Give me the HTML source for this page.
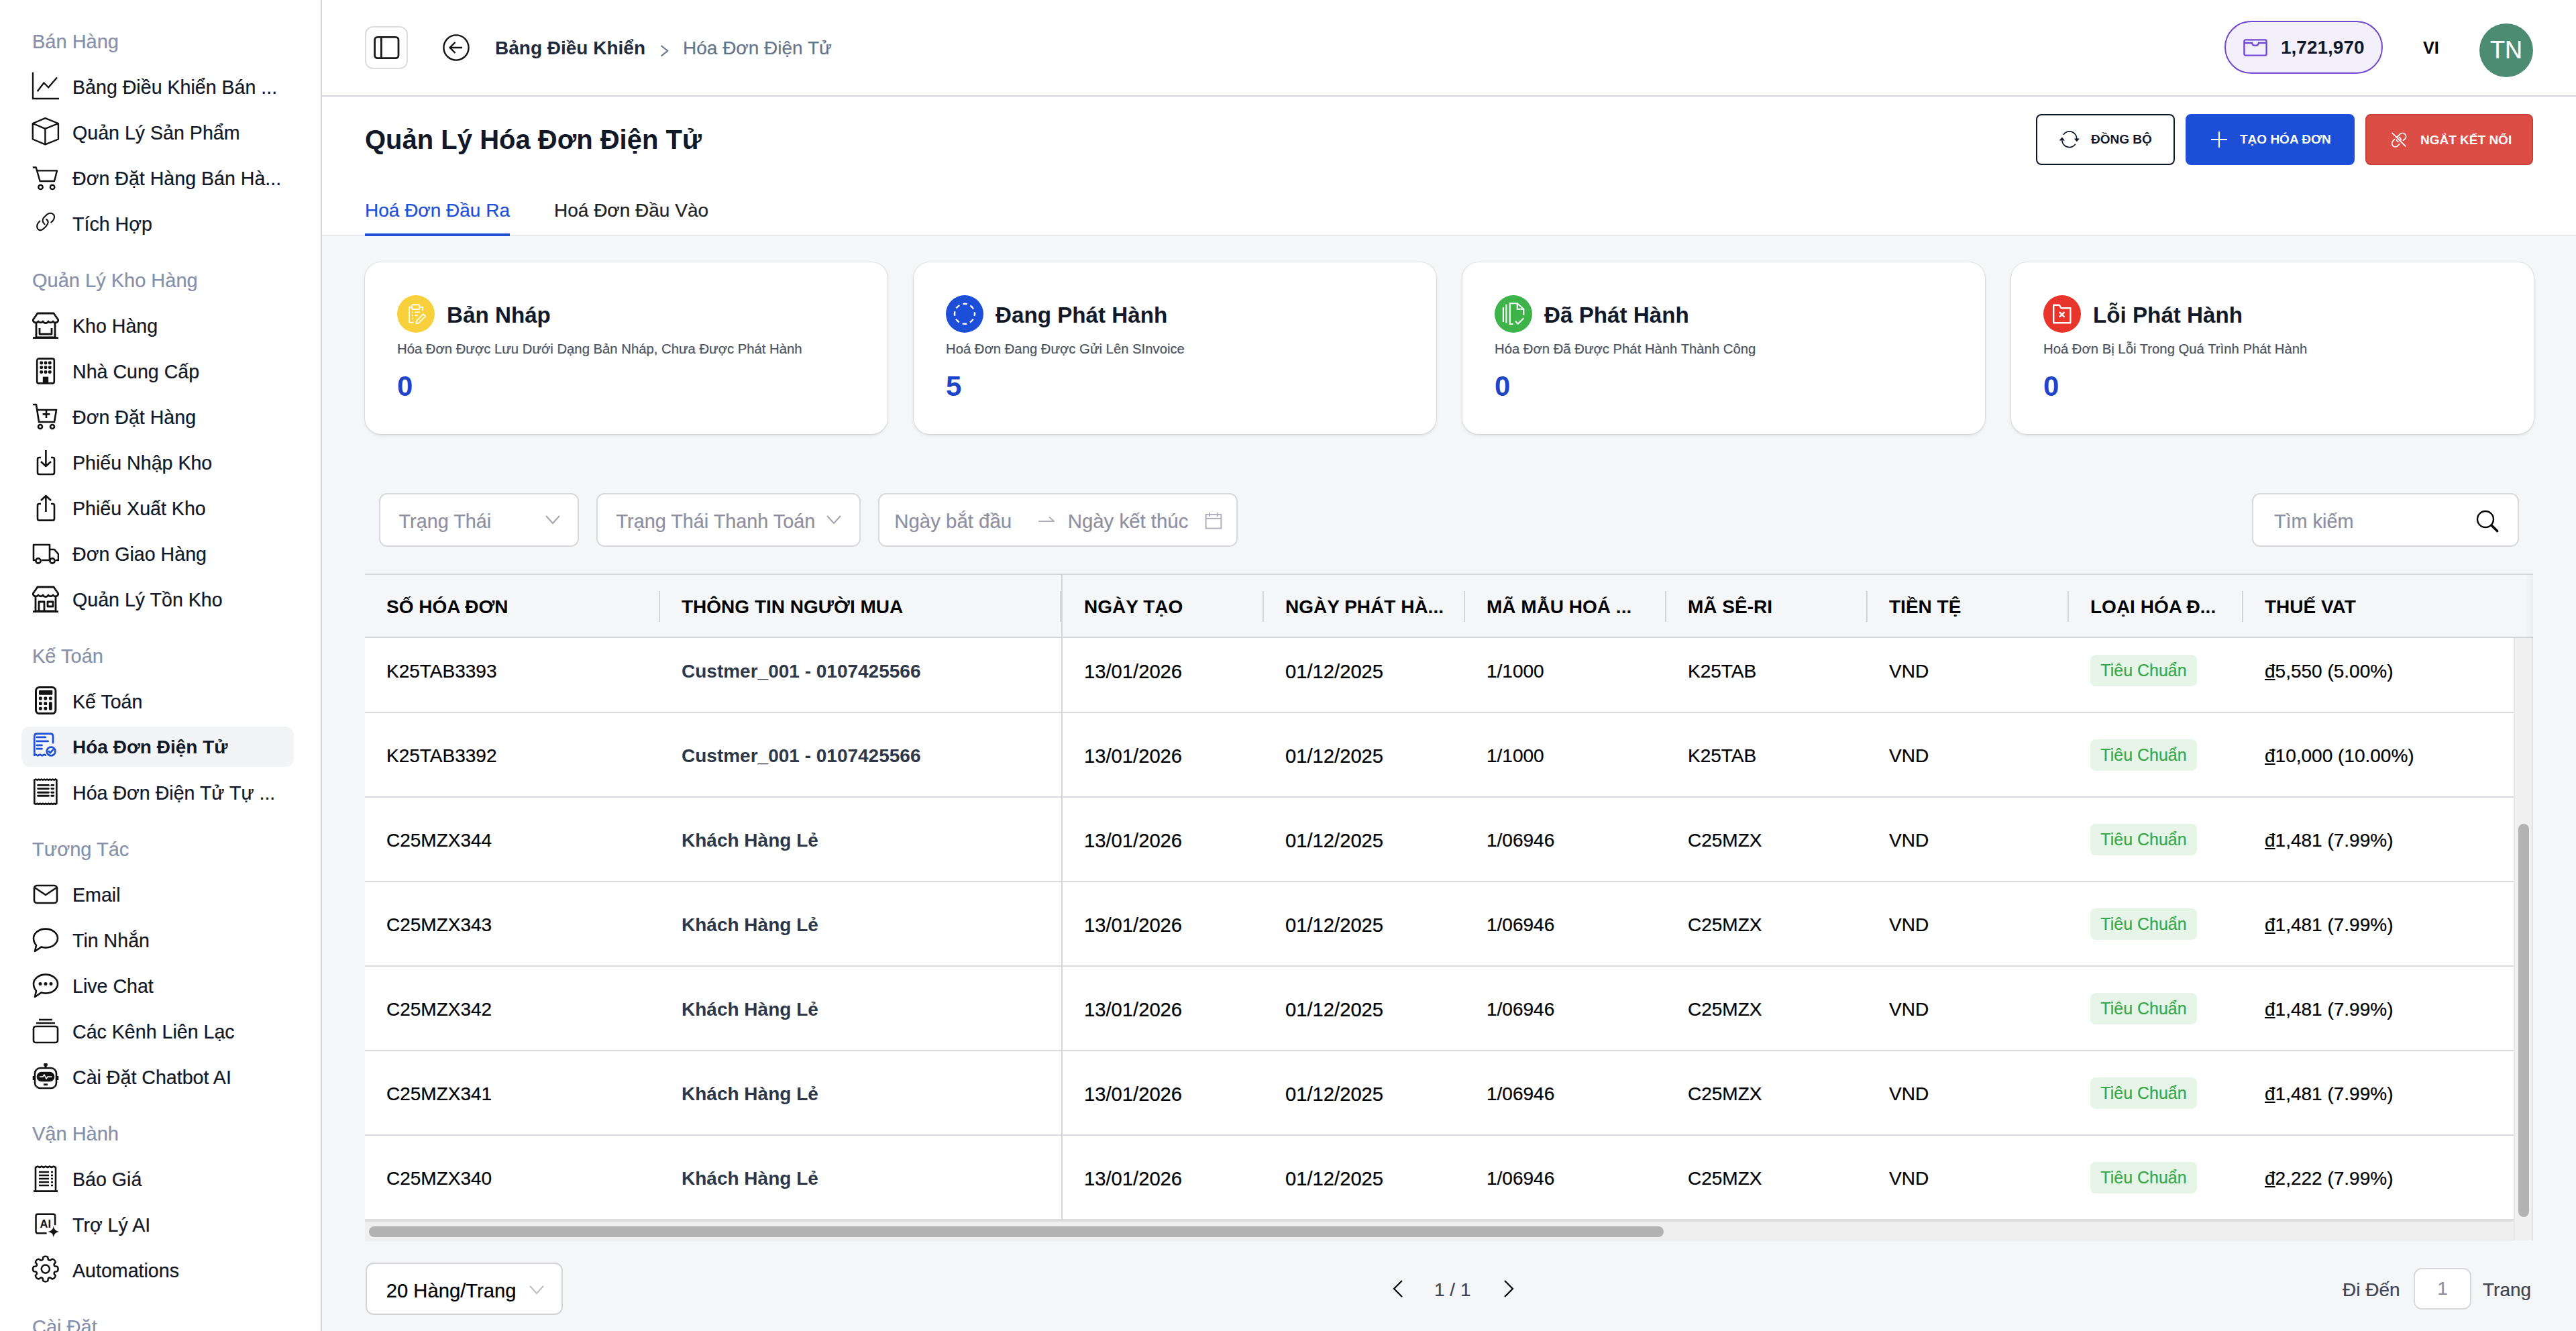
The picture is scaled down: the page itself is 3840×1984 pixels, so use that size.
<!DOCTYPE html>
<html><head><meta charset="utf-8">
<style>
html{zoom:2}
*{box-sizing:border-box;margin:0;padding:0}
body{width:1920px;height:992px;overflow:hidden;position:relative;background:#f5f6f8;font-family:"Liberation Sans",sans-serif;color:#0f172a;font-size:14px}
.abs{position:absolute}
body{-webkit-text-stroke:0.12px currentColor}
.thc,.cell.b,.card .ct,.card .cn,.btn,.it.act .tx,.bd{-webkit-text-stroke:0}
svg text{-webkit-text-stroke:0}
svg{display:block}
/* sidebar */
#sb{position:absolute;left:0;top:0;width:240px;height:992px;background:#fff;border-right:1px solid #d5d6dc;padding-top:13.5px;overflow:hidden}
.sec{height:34px;line-height:35px;padding-left:24px;color:#8690a9;font-size:14.5px;margin-top:8px;white-space:nowrap}
.sec.first{margin-top:0}
.it{height:34px;position:relative;white-space:nowrap;color:#111827}
.it .ic{position:absolute;left:24px;top:7px;width:20px;height:20px}
.it .tx{position:absolute;left:54px;top:0.5px;line-height:34px;font-size:14.3px}
.it.act::before{content:"";position:absolute;left:16px;right:20px;top:2px;bottom:2px;background:#f3f4f6;border-radius:6px}
.it.act .tx{font-weight:700;font-size:14px}
/* header */
#hd{position:absolute;left:240px;top:0;width:1680px;height:72px;background:#fff;border-bottom:1px solid #d5d6dc}
#ph{position:absolute;left:240px;top:72px;width:1680px;height:104px;background:#fff;border-bottom:1px solid #e8e9ec}
.btn{position:absolute;top:85px;height:38px;border-radius:4px;font-size:9.5px;font-weight:700;white-space:nowrap}
.card{position:absolute;top:195.7px;width:389.5px;height:127.9px;background:#fff;border-radius:12px;box-shadow:0 0 0 0.5px rgba(0,0,0,0.07),0 1px 2.5px rgba(0,0,0,0.10)}
.card .cic{position:absolute;left:24px;top:24.3px;width:28px;height:28px;border-radius:50%}
.card .ct{position:absolute;left:61px;top:27.5px;line-height:24px;font-size:16.6px;font-weight:700;color:#111827;white-space:nowrap}
.card .cs{position:absolute;left:24px;top:57.5px;line-height:14px;font-size:10.15px;color:#4b5563;white-space:nowrap}
.card .cn{position:absolute;left:24px;top:80.25px;line-height:24px;font-size:21px;font-weight:700;color:#1d45c9}
.inp{position:absolute;top:367.5px;height:40px;background:#fff;border:1px solid #d9d9dd;border-radius:6px;color:#8e8fa0;font-size:14px;white-space:nowrap}
.inp span{position:absolute;top:1.2px;line-height:38px;font-size:14.4px}
/* table */
#tbl{position:absolute;left:272px;top:427.5px;width:1616px;height:497px;border-top:1px solid #d5d6dc;overflow:hidden}
.th{position:absolute;top:0;height:47px;background:#f5f6f8;border-bottom:1px solid #d5d6dc}
.thc{position:absolute;top:1px;height:46px;line-height:46px;font-weight:700;font-size:14px;color:#000;white-space:nowrap}
.sep{position:absolute;top:12px;width:1px;height:23px;background:#d5d6dc}
.row{position:absolute;left:0;width:1601.35px;height:63px;background:#fff;border-bottom:1px solid #dcdde2}
.cell{position:absolute;top:0.75px;line-height:62px;font-size:14px;color:#000;white-space:nowrap}
.cell.dt{font-size:14.6px}
.cell.b{font-weight:700;color:#2d3748}
.dg{text-decoration:underline;text-decoration-thickness:0.9px;text-underline-offset:1.2px;text-decoration-skip-ink:none}
.tag{position:absolute;top:19.5px;height:23.5px;width:79.5px;line-height:23.5px;background:#e7f5e9;color:#3aa84b;border-radius:4px;font-size:12.5px;text-align:center}
</style></head><body>

<div id="sb">
 <div class="sec first">Bán Hàng</div>
 <div class="it"><svg class="ic" viewBox="0 0 20 20" fill="none" stroke="#111" stroke-width="1.15" style="overflow:visible"><path d="M0.5 -0.6V19H20"/><path d="M3.8 13.6L8.7 7.25L12.1 10.65L18.5 3.3"/></svg><span class="tx">Bảng Điều Khiển Bán ...</span></div>
 <div class="it"><svg class="ic" viewBox="0 0 20 20" fill="none" stroke="#111" stroke-width="1.2" stroke-linejoin="round" style="overflow:visible"><path d="M9.7 -0.4L19.45 3.5V15.25L9.7 19.2L0.4 15.25V3.5Z"/><path d="M0.4 3.5L9.7 7.45L19.45 3.5M9.7 7.45V19.2"/></svg><span class="tx">Quản Lý Sản Phẩm</span></div>
 <div class="it"><svg class="ic" viewBox="0 0 20 20" fill="none" stroke="#111" stroke-width="1.2" stroke-linejoin="round" style="overflow:visible"><path d="M0.4 2.25H2.85L5.8 12.5H16.5L18.5 4.7H3.3"/><circle cx="6.25" cy="16.95" r="1.6"/><circle cx="15.05" cy="16.95" r="1.6"/></svg><span class="tx">Đơn Đặt Hàng Bán Hà...</span></div>
 <div class="it"><svg class="ic" viewBox="0 0 20 20" fill="none" stroke="#111" stroke-width="1.05" stroke-linecap="round" style="overflow:visible"><path d="M9.27 10.65C7.5 9.2 7.3 7 9 5.3L11.15 3.3C12.8 1.8 15 2.2 16.2 3.8C17 5.2 16.2 7.8 14.15 9.15"/><path d="M10.6 6.9C12.6 8.2 12 10.5 10 12.5L8 14.3C6.2 15.7 4.2 15.2 3.63 12.8C3.3 11.3 4.3 9.5 5.7 8.2"/></svg><span class="tx">Tích Hợp</span></div>

 <div class="sec">Quản Lý Kho Hàng</div>
 <div class="it"><svg class="ic" viewBox="0 0 20 20" fill="none" stroke="#111" stroke-width="1.4" stroke-linejoin="round"><path d="M4 1H16L19.5 6A2.2 2.2 0 0 1 15.5 7A2.2 2.2 0 0 1 12 7A2.2 2.2 0 0 1 8 7A2.2 2.2 0 0 1 4.5 7A2.2 2.2 0 0 1 0.5 6Z"/><path d="M3 8.5V19H17V8.5M5.5 12V16.5H14.5V12M0.5 19.3H19.5"/></svg><span class="tx">Kho Hàng</span></div>
 <div class="it"><svg class="ic" viewBox="0 0 20 20"><rect x="3.6" y="0.8" width="12.8" height="18.4" rx="1.3" fill="none" stroke="#111" stroke-width="1.3"/><g fill="#111"><rect x="5.7" y="2.8" width="2.3" height="2.3" rx="0.7"/><rect x="8.85" y="2.8" width="2.3" height="2.3" rx="0.7"/><rect x="12" y="2.8" width="2.3" height="2.3" rx="0.7"/><rect x="5.7" y="6.2" width="2.3" height="2.3" rx="0.7"/><rect x="8.85" y="6.2" width="2.3" height="2.3" rx="0.7"/><rect x="12" y="6.2" width="2.3" height="2.3" rx="0.7"/><rect x="5.7" y="9.6" width="2.3" height="2.3" rx="0.7"/><rect x="8.85" y="9.6" width="2.3" height="2.3" rx="0.7"/><rect x="12" y="9.6" width="2.3" height="2.3" rx="0.7"/><rect x="7.9" y="14.3" width="4.2" height="5"/></g></svg><span class="tx">Nhà Cung Cấp</span></div>
 <div class="it"><svg class="ic" viewBox="0 0 20 20" fill="none" stroke="#111" stroke-width="1.3" stroke-linejoin="round"><path d="M0.5 1H3L5 14H16.5L18 5H3.8"/><circle cx="6" cy="17.5" r="1.5"/><circle cx="15" cy="17.5" r="1.5"/><path d="M10.5 5.5V11M7.8 8.2H13.2"/></svg><span class="tx">Đơn Đặt Hàng</span></div>
 <div class="it"><svg class="ic" viewBox="0 0 20 20" fill="none" stroke="#111" stroke-width="1.3" stroke-linejoin="round"><path d="M6.5 6.5H5.2Q4 6.5 4 7.7V17.8Q4 19 5.2 19H15.3Q16.5 19 16.5 17.8V7.7Q16.5 6.5 15.3 6.5H14"/><path d="M10.2 1V13M6.5 9.5L10.2 13L14 9.5"/></svg><span class="tx">Phiếu Nhập Kho</span></div>
 <div class="it"><svg class="ic" viewBox="0 0 20 20" fill="none" stroke="#111" stroke-width="1.3" stroke-linejoin="round"><path d="M6.5 7H5.2Q4 7 4 8.2V18.1Q4 19.3 5.2 19.3H15.3Q16.5 19.3 16.5 18.1V8.2Q16.5 7 15.3 7H14"/><path d="M10.2 13V1M6.5 4.5L10.2 1L14 4.5"/></svg><span class="tx">Phiếu Xuất Kho</span></div>
 <div class="it"><svg class="ic" viewBox="0 0 20 20" fill="none" stroke="#111" stroke-width="1.3" stroke-linejoin="round"><path d="M2.5 15H1V3.5H13V15H7M13 7H16.5L19.5 10.5V15H17.5M13 15H12.5"/><circle cx="4.5" cy="15.5" r="1.8"/><circle cx="15" cy="15.5" r="1.8"/></svg><span class="tx">Đơn Giao Hàng</span></div>
 <div class="it"><svg class="ic" viewBox="0 0 20 20" fill="none" stroke="#111" stroke-width="1.4" stroke-linejoin="round"><path d="M4 1H16L19.5 6A2.2 2.2 0 0 1 15.5 7A2.2 2.2 0 0 1 12 7A2.2 2.2 0 0 1 8 7A2.2 2.2 0 0 1 4.5 7A2.2 2.2 0 0 1 0.5 6Z"/><path d="M2.5 8.5V19H17.5V8.5M5 19V12H9V19M11.5 12H15.5V15.5H11.5ZM0.5 19.3H19.5"/></svg><span class="tx">Quản Lý Tồn Kho</span></div>

 <div class="sec">Kế Toán</div>
 <div class="it"><svg class="ic" viewBox="0 0 20 20" style="overflow:visible"><rect x="2.75" y="-0.2" width="14.7" height="19.5" rx="2.6" fill="none" stroke="#111" stroke-width="1.5"/><g fill="#111"><rect x="5" y="2" width="10.15" height="3.4" rx="0.6"/><rect x="4.95" y="6.8" width="2.4" height="2.4" rx="0.8"/><rect x="8.7" y="6.8" width="2.4" height="2.4" rx="0.8"/><rect x="12.45" y="6.8" width="2.4" height="2.4" rx="0.8"/><rect x="4.95" y="10.6" width="2.4" height="2.4" rx="0.8"/><rect x="8.7" y="10.6" width="2.4" height="2.4" rx="0.8"/><rect x="12.45" y="10.6" width="2.4" height="6.15" rx="0.8"/><rect x="4.95" y="14.35" width="2.4" height="2.4" rx="0.8"/><rect x="8.7" y="14.35" width="2.4" height="2.4" rx="0.8"/></g></svg><span class="tx">Kế Toán</span></div>
 <div class="it act"><svg class="ic" viewBox="0 0 20 20" fill="none" stroke="#1f4fd6" stroke-width="1.35" stroke-linecap="round" stroke-linejoin="round" style="overflow:visible"><path d="M9.9 16.3Q9 15.6 8.2 16.3Q7.4 17 6.6 16.3Q5.8 15.6 5 16.3Q4.2 17 3.4 16.3Q2.6 15.6 1.65 16.4V2.4Q1.65 0.35 3.7 0.35H13.5Q15.55 0.35 15.55 2.4V7.1"/><path d="M3.5 2.97H9.9M3.5 5.97H11.8M3.5 8.97H7.25M3.5 11.6H7.25"/><circle cx="14.05" cy="13.5" r="3.2"/><path d="M12.3 13.5L13.45 14.6L15.4 12.4"/></svg><span class="tx">Hóa Đơn Điện Tử</span></div>
 <div class="it"><svg class="ic" viewBox="0 0 20 20" fill="none" stroke="#111" stroke-width="1.3" style="overflow:visible"><path d="M1.65 0.8L2.7 0.3L3.75 0.8L4.8 0.3L5.85 0.8L6.9 0.3L7.95 0.8L9 0.3L10.05 0.8L11.1 0.3L12.15 0.8L13.2 0.3L14.25 0.8L15.3 0.3L16.35 0.8L17.4 0.3L18.2 0.8V18.4L17.4 18.9L16.35 18.4L15.3 18.9L14.25 18.4L13.2 18.9L12.15 18.4L11.1 18.9L10.05 18.4L9 18.9L7.95 18.4L6.9 18.9L5.85 18.4L4.8 18.9L3.75 18.4L2.7 18.9L1.65 18.4Z"/><path d="M4.3 4.7H12.2M4.3 7.3H12.2M4.3 10.1H12.2M4.3 12.6H12.2M14.4 4.7H15.9M14.4 7.3H15.9M14.4 10.1H15.9M14.4 12.6H15.9" stroke-width="1.45" stroke-linecap="round"/></svg><span class="tx">Hóa Đơn Điện Tử Tự ...</span></div>

 <div class="sec">Tương Tác</div>
 <div class="it"><svg class="ic" viewBox="0 0 20 20" fill="none" stroke="#111" stroke-width="1.3" stroke-linejoin="round"><rect x="1.5" y="3.5" width="17" height="13" rx="2"/><path d="M1.8 5L10 10.5L18.2 5"/></svg><span class="tx">Email</span></div>
 <div class="it"><svg class="ic" viewBox="0 0 20 20" fill="none" stroke="#111" stroke-width="1.3" stroke-linejoin="round"><path d="M10 1.8C15 1.8 19 4.9 19 8.8C19 12.7 15 15.8 10 15.8C8.8 15.8 7.7 15.6 6.7 15.3L2 18.5L3 14C1.8 12.6 1 10.8 1 8.8C1 4.9 5 1.8 10 1.8Z"/></svg><span class="tx">Tin Nhắn</span></div>
 <div class="it"><svg class="ic" viewBox="0 0 20 20" fill="none" stroke="#111" stroke-width="1.3" stroke-linejoin="round"><path d="M10 1.8C15 1.8 19 4.9 19 8.8C19 12.7 15 15.8 10 15.8C8.8 15.8 7.7 15.6 6.7 15.3L2 18.5L3 14C1.8 12.6 1 10.8 1 8.8C1 4.9 5 1.8 10 1.8Z"/><circle cx="6" cy="8.8" r="0.6" fill="#111"/><circle cx="10" cy="8.8" r="0.6" fill="#111"/><circle cx="14" cy="8.8" r="0.6" fill="#111"/></svg><span class="tx">Live Chat</span></div>
 <div class="it"><svg class="ic" viewBox="0 0 20 20" fill="none" stroke="#111" stroke-width="1.3" stroke-linejoin="round"><rect x="1" y="6.5" width="18" height="12" rx="1.5"/><path d="M3 4H17M5 1.5H15"/></svg><span class="tx">Các Kênh Liên Lạc</span></div>
 <div class="it"><svg class="ic" viewBox="0 0 20 20" fill="none" stroke="#111" stroke-width="1.3" stroke-linejoin="round"><path d="M10 3V1"/><circle cx="10" cy="1" r="0.8" fill="#111"/><rect x="2" y="3.5" width="16" height="15" rx="4"/><rect x="4" y="7" width="12" height="6" rx="3" fill="#111"/><path d="M5.5 10H8L9 8.5L10.5 11.5L11.5 10H14.5" stroke="#fff" stroke-width="0.8"/><path d="M8.5 15.8H11.5M1 9.5V12.5M19 9.5V12.5"/></svg><span class="tx">Cài Đặt Chatbot AI</span></div>

 <div class="sec">Vận Hành</div>
 <div class="it"><svg class="ic" viewBox="0 0 20 20" fill="none" stroke="#111" stroke-width="1.3"><path d="M2.5 19V1.5L4 0.8L5.5 1.5L7 0.8L8.5 1.5L10 0.8L11.5 1.5L13 0.8L14.5 1.5L16 0.8L17.5 1.5V19M1 19.3H19"/><path d="M5 5H12.5M5 7.5H12.5M5 10H12.5M5 12.5H12.5M5 15H12.5M14 5H15.5M14 7.5H15.5M14 10H15.5M14 12.5H15.5M14 15H15.5"/></svg><span class="tx">Báo Giá</span></div>
 <div class="it"><svg class="ic" viewBox="0 0 20 20" fill="none" stroke="#111" stroke-width="1.25" stroke-linejoin="round" style="overflow:visible"><path d="M10.8 16.65H4.2Q2.77 16.65 2.77 15.2V3.8Q2.77 2.35 4.2 2.35H15.6Q17.05 2.35 17.05 3.8V10.6"/><text x="9.9" y="12.5" text-anchor="middle" font-size="8.6" font-family="Liberation Sans" font-weight="700" fill="#111" stroke="none" textLength="8.2" lengthAdjust="spacingAndGlyphs">AI</text><path d="M15.9 11.4Q16.4 15 20 15.5Q16.4 16 15.9 19.6Q15.4 16 11.8 15.5Q15.4 15 15.9 11.4Z" fill="#111" stroke="none"/></svg><span class="tx">Trợ Lý AI</span></div>
 <div class="it"><svg class="ic" viewBox="0 0 20 20" fill="none" stroke="#111" stroke-width="1.25" stroke-linejoin="round" style="overflow:visible"><path d="M7.86 2.29 L8.14 0.47 Q9.90 -0.70 11.66 0.47 L11.94 2.29 Q12.50 3.02 13.42 2.90 L14.90 1.82 Q16.97 2.23 17.38 4.30 L16.30 5.78 Q16.18 6.70 16.91 7.26 L18.73 7.54 Q19.90 9.30 18.73 11.06 L16.91 11.34 Q16.18 11.90 16.30 12.82 L17.38 14.30 Q16.97 16.37 14.90 16.78 L13.42 15.70 Q12.50 15.58 11.94 16.31 L11.66 18.13 Q9.90 19.30 8.14 18.13 L7.86 16.31 Q7.30 15.58 6.38 15.70 L4.90 16.78 Q2.83 16.37 2.42 14.30 L3.50 12.82 Q3.62 11.90 2.89 11.34 L1.07 11.06 Q-0.10 9.30 1.07 7.54 L2.89 7.26 Q3.62 6.70 3.50 5.78 L2.42 4.30 Q2.83 2.23 4.90 1.82 L6.38 2.90 Q7.30 3.02 7.86 2.29Z"/><circle cx="9.9" cy="9.3" r="3.05"/></svg><span class="tx">Automations</span></div>
 <div class="sec">Cài Đặt</div>
</div>

<div id="hd">
 <div class="abs" style="left:32px;top:19.5px;width:32px;height:32px;border:1px solid #dcdce1;border-radius:6px"><svg class="abs" style="left:5px;top:6px" width="20" height="18" viewBox="0 0 20 18" fill="none" stroke="#1a1a1a" stroke-width="1.4"><rect x="1.3" y="1.2" width="17.7" height="15.6" rx="2"/><path d="M6.2 1.2V16.8"/></svg></div>
 <svg class="abs" style="left:90px;top:25.5px" width="20" height="20" viewBox="0 0 20 20" fill="none" stroke="#111" stroke-width="1.2"><circle cx="10" cy="10" r="9.3"/><path d="M14.5 10H5.5M9.3 6L5.3 10L9.3 14"/></svg>
 <span class="abs" style="left:129px;top:26px;line-height:20px;font-weight:700;color:#1e293b;white-space:nowrap;-webkit-text-stroke:0">Bảng Điều Khiển</span>
 <svg class="abs" style="left:252px;top:33.5px" width="7" height="9" viewBox="0 0 7 9" fill="none" stroke="#64748b" stroke-width="1"><path d="M0.8 0.5L5.6 4.4L0.8 8.3"/></svg>
 <span class="abs" style="left:269px;top:26px;line-height:20px;color:#64748b;white-space:nowrap">Hóa Đơn Điện Tử</span>
 <div class="abs" style="left:1418px;top:15.5px;width:118px;height:39.5px;border:1px solid #7048d4;border-radius:20px;background:#f3f0fc"></div>
 <svg class="abs" style="left:1432px;top:29px" width="18" height="13" viewBox="0 0 18 13" fill="none" stroke="#7048d4" stroke-width="1.2"><rect x="0.7" y="0.7" width="16.6" height="11.6" rx="1"/><path d="M0.7 3H6.5Q6.8 5 9 5Q11.2 5 11.5 3H17.3"/></svg>
 <span class="abs" style="left:1460px;top:25.5px;line-height:20px;font-weight:700;color:#0f172a;-webkit-text-stroke:0">1,721,970</span>
 <span class="abs" style="left:1566px;top:27.3px;line-height:16px;font-size:12.6px;font-weight:700;color:#000;-webkit-text-stroke:0">VI</span>
 <div class="abs" style="left:1608px;top:17.5px;width:40px;height:40px;border-radius:50%;background:#4b8c72;color:#fff;font-size:18px;line-height:40px;text-align:center">TN</div>
</div>

<div id="ph">
 <span class="abs" style="left:32px;top:18px;line-height:28px;font-size:20px;font-weight:700;color:#111827;white-space:nowrap;-webkit-text-stroke:0">Quản Lý Hóa Đơn Điện Tử</span>
 <span class="abs" style="left:32px;top:74.75px;line-height:20px;color:#1d4fd8;white-space:nowrap">Hoá Đơn Đầu Ra</span>
 <div class="abs" style="left:32px;top:102px;width:108px;height:2px;background:#1d4fd8"></div>
 <span class="abs" style="left:173px;top:74.75px;line-height:20px;color:#1f1f1f;white-space:nowrap">Hoá Đơn Đầu Vào</span>
</div>

<div class="btn" style="left:1517.5px;width:103.5px;border:1px solid #0f172a;background:#fff;color:#0f172a">
 <svg class="abs" style="left:-1px;top:-1px;overflow:visible" width="50" height="38" viewBox="0 0 50 38"><path d="M20.45 15.45A5.4 5.4 0 0 1 30.4 18.5M19.45 19.8A5.5 5.5 0 0 0 29.4 22.4" fill="none" stroke="#0f172a" stroke-width="0.85"/><path d="M28.4 18.25H32.5L30.4 20.6ZM17.3 19.7H21.5L19.45 17.2Z" fill="#0f172a"/></svg>
 <span class="abs" style="left:40px;top:11px;line-height:14px">ĐỒNG BỘ</span>
</div>
<div class="btn" style="left:1629px;width:126px;background:#1d4ed8;color:#fff">
 <svg class="abs" style="left:18.5px;top:12.5px" width="13" height="13" viewBox="0 0 13 13" stroke="#fff" stroke-width="1.1"><path d="M6.5 0.5V12.5M0.5 6.5H12.5"/></svg>
 <span class="abs" style="left:40.5px;top:12px;line-height:14px">TẠO HÓA ĐƠN</span>
</div>
<div class="btn" style="left:1763px;width:125px;background:#dc4d45;border:1px solid #c9403a;color:#fff">
 <svg class="abs" style="left:17px;top:11px;overflow:visible" width="14" height="14" viewBox="0 0 14 14" fill="none" stroke="#fff" stroke-width="0.9" stroke-linecap="round"><path d="M2.05 2.2L11.85 11.9"/><path d="M5.6 5.2L8 2.8A2.55 2.55 0 0 1 11.6 6.4L10.3 7.6"/><path d="M3.7 7L2.6 8.1A2.5 2.5 0 0 0 6.1 11.7L7.5 10.3"/><path d="M7.2 5.3Q8.4 6 8.6 7.4M5.2 7.3Q5.7 8.3 6.4 8.6"/></svg>
 <span class="abs" style="left:40px;top:11.5px;line-height:14px">NGẮT KẾT NỐI</span>
</div>

<!-- cards -->
<div class="card" style="left:272px">
 <div class="cic" style="background:#f7d03c"><svg class="abs" style="left:0;top:0" width="28" height="28" viewBox="0 0 28 28" fill="none" stroke="#fffdf0" stroke-width="0.95" stroke-linejoin="round"><path d="M11 8.85H9V20.3H12.3M16.7 8.85H19.1V11.8"/><rect x="11.05" y="7.15" width="5.6" height="3.35" rx="0.8"/><path d="M11.1 12.7H11.9M13.25 12.7H16.9M11.1 15.15H11.9M13.25 15.15H15.2M11.1 17.55H11.9"/><path d="M19.5 14.1L21.1 15.7L16.1 20.7L14.2 21.2L14.5 19.1Z"/></svg></div>
 <div class="ct">Bản Nháp</div>
 <div class="cs">Hóa Đơn Được Lưu Dưới Dạng Bản Nháp, Chưa Được Phát Hành</div>
 <div class="cn">0</div>
</div>
<div class="card" style="left:681px">
 <div class="cic" style="background:#1d4ed8"><svg class="abs" style="left:0;top:0" width="28" height="28" viewBox="0 0 28 28" fill="none" stroke="#fff" stroke-width="1.2" stroke-dasharray="3.3 2.59" stroke-dashoffset="1.65"><circle cx="14" cy="13.9" r="7.5"/></svg></div>
 <div class="ct">Đang Phát Hành</div>
 <div class="cs">Hoá Đơn Đang Được Gửi Lên SInvoice</div>
 <div class="cn">5</div>
</div>
<div class="card" style="left:1090px">
 <div class="cic" style="background:#3db34a"><svg class="abs" style="left:0;top:0" width="28" height="28" viewBox="0 0 28 28" fill="none" stroke="#fff" stroke-width="1.05"><path d="M6.45 8.85V20M8.7 6.9V20.75"/><path d="M13.85 21.5H11.4V6.15H16.9L21.65 10.4V14.9"/><path d="M16.9 6.15V10.4H21.65"/><path d="M15.5 19.4L17.45 21.35L21.65 17.1"/></svg></div>
 <div class="ct">Đã Phát Hành</div>
 <div class="cs">Hóa Đơn Đã Được Phát Hành Thành Công</div>
 <div class="cn">0</div>
</div>
<div class="card" style="left:1499px">
 <div class="cic" style="background:#e8352b"><svg class="abs" style="left:0;top:0" width="28" height="28" viewBox="0 0 28 28" fill="none" stroke="#fff" stroke-width="1.2" stroke-linejoin="round"><path d="M7.6 7.35H11.85L13.25 9.6H20.15V20.6H7.6Z"/><path d="M12.35 12.95L15.35 15.95M15.35 12.95L12.35 15.95" stroke-width="1.3" stroke-linecap="round"/></svg></div>
 <div class="ct">Lỗi Phát Hành</div>
 <div class="cs">Hoá Đơn Bị Lỗi Trong Quá Trình Phát Hành</div>
 <div class="cn">0</div>
</div>

<!-- filters -->
<div class="inp" style="left:282.3px;width:149.2px"><span style="left:14px">Trạng Thái</span><svg class="abs" style="left:123px;top:15px" width="11" height="8" viewBox="0 0 11 8" fill="none" stroke="#a3a4b0" stroke-width="1"><path d="M0.5 1L5.5 6.5L10.5 1"/></svg></div>
<div class="inp" style="left:444.3px;width:197.2px"><span style="left:14px">Trạng Thái Thanh Toán</span><svg class="abs" style="left:170.5px;top:15px" width="11" height="8" viewBox="0 0 11 8" fill="none" stroke="#a3a4b0" stroke-width="1"><path d="M0.5 1L5.5 6.5L10.5 1"/></svg></div>
<div class="inp" style="left:654.35px;width:268.25px"><span style="left:11.3px;font-size:14.7px">Ngày bắt đầu</span><svg class="abs" style="left:118.5px;top:16px" width="12" height="5" viewBox="0 0 12 5" fill="none" stroke="#b0b1bc" stroke-width="1"><path d="M0 4H11.5L8 0.8"/></svg><span style="left:140.5px;font-size:14.7px">Ngày kết thúc</span><svg class="abs" style="left:242.5px;top:13px" width="13" height="13" viewBox="0 0 13 13" fill="none" stroke="#b0b1bc" stroke-width="1"><rect x="0.8" y="2" width="11.4" height="10.3"/><path d="M0.8 5H12.2M3.5 0.5V3.5M9.5 0.5V3.5"/></svg></div>
<div class="inp" style="left:1678.5px;width:199.1px"><span style="left:15.5px">Tìm kiếm</span><svg class="abs" style="left:166px;top:11.5px" width="17" height="17" viewBox="0 0 17 17" fill="none" stroke="#000" stroke-width="1.2"><circle cx="7" cy="7" r="6"/><path d="M11.5 11.5L15.8 15.8" stroke-width="1.8" stroke-linecap="round"/></svg></div>

<!-- table -->
<div id="tbl">
 <div class="th" style="left:0;width:1616px">
  <span class="thc" style="left:16px">SỐ HÓA ĐƠN</span><div class="sep" style="left:219px"></div>
  <span class="thc" style="left:236px">THÔNG TIN NGƯỜI MUA</span><div class="sep" style="left:518px"></div>
  <span class="thc" style="left:536px">NGÀY TẠO</span><div class="sep" style="left:669px"></div>
  <span class="thc" style="left:686px">NGÀY PHÁT HÀ...</span><div class="sep" style="left:819px"></div>
  <span class="thc" style="left:836px">MÃ MẪU HOÁ ...</span><div class="sep" style="left:969px"></div>
  <span class="thc" style="left:986px">MÃ SÊ-RI</span><div class="sep" style="left:1119px"></div>
  <span class="thc" style="left:1136px">TIỀN TỆ</span><div class="sep" style="left:1269px"></div>
  <span class="thc" style="left:1286px">LOẠI HÓA Đ...</span><div class="sep" style="left:1399px"></div>
  <span class="thc" style="left:1416px">THUẾ VAT</span>
 </div>
 <div id="body" class="abs" style="left:0;top:47px;width:1601.35px;height:434px;overflow:hidden;background:#fff">
  <div class="abs" style="left:0;top:-7px;width:1601.35px">
   <div class="row" style="top:0px"><span class="cell" style="left:16px">K25TAB3393</span><span class="cell b" style="left:236px">Custmer_001 - 0107425566</span><span class="cell dt" style="left:536px">13/01/2026</span><span class="cell dt" style="left:686px">01/12/2025</span><span class="cell" style="left:836px">1/1000</span><span class="cell" style="left:986px">K25TAB</span><span class="cell" style="left:1136px">VND</span><span class="tag" style="left:1286px">Tiêu Chuẩn</span><span class="cell" style="left:1416px"><u class="dg">đ</u>5,550 (5.00%)</span></div>
   <div class="row" style="top:63px"><span class="cell" style="left:16px">K25TAB3392</span><span class="cell b" style="left:236px">Custmer_001 - 0107425566</span><span class="cell dt" style="left:536px">13/01/2026</span><span class="cell dt" style="left:686px">01/12/2025</span><span class="cell" style="left:836px">1/1000</span><span class="cell" style="left:986px">K25TAB</span><span class="cell" style="left:1136px">VND</span><span class="tag" style="left:1286px">Tiêu Chuẩn</span><span class="cell" style="left:1416px"><u class="dg">đ</u>10,000 (10.00%)</span></div>
   <div class="row" style="top:126px"><span class="cell" style="left:16px">C25MZX344</span><span class="cell b" style="left:236px">Khách Hàng Lẻ</span><span class="cell dt" style="left:536px">13/01/2026</span><span class="cell dt" style="left:686px">01/12/2025</span><span class="cell" style="left:836px">1/06946</span><span class="cell" style="left:986px">C25MZX</span><span class="cell" style="left:1136px">VND</span><span class="tag" style="left:1286px">Tiêu Chuẩn</span><span class="cell" style="left:1416px"><u class="dg">đ</u>1,481 (7.99%)</span></div>
   <div class="row" style="top:189px"><span class="cell" style="left:16px">C25MZX343</span><span class="cell b" style="left:236px">Khách Hàng Lẻ</span><span class="cell dt" style="left:536px">13/01/2026</span><span class="cell dt" style="left:686px">01/12/2025</span><span class="cell" style="left:836px">1/06946</span><span class="cell" style="left:986px">C25MZX</span><span class="cell" style="left:1136px">VND</span><span class="tag" style="left:1286px">Tiêu Chuẩn</span><span class="cell" style="left:1416px"><u class="dg">đ</u>1,481 (7.99%)</span></div>
   <div class="row" style="top:252px"><span class="cell" style="left:16px">C25MZX342</span><span class="cell b" style="left:236px">Khách Hàng Lẻ</span><span class="cell dt" style="left:536px">13/01/2026</span><span class="cell dt" style="left:686px">01/12/2025</span><span class="cell" style="left:836px">1/06946</span><span class="cell" style="left:986px">C25MZX</span><span class="cell" style="left:1136px">VND</span><span class="tag" style="left:1286px">Tiêu Chuẩn</span><span class="cell" style="left:1416px"><u class="dg">đ</u>1,481 (7.99%)</span></div>
   <div class="row" style="top:315px"><span class="cell" style="left:16px">C25MZX341</span><span class="cell b" style="left:236px">Khách Hàng Lẻ</span><span class="cell dt" style="left:536px">13/01/2026</span><span class="cell dt" style="left:686px">01/12/2025</span><span class="cell" style="left:836px">1/06946</span><span class="cell" style="left:986px">C25MZX</span><span class="cell" style="left:1136px">VND</span><span class="tag" style="left:1286px">Tiêu Chuẩn</span><span class="cell" style="left:1416px"><u class="dg">đ</u>1,481 (7.99%)</span></div>
   <div class="row" style="top:378px"><span class="cell" style="left:16px">C25MZX340</span><span class="cell b" style="left:236px">Khách Hàng Lẻ</span><span class="cell dt" style="left:536px">13/01/2026</span><span class="cell dt" style="left:686px">01/12/2025</span><span class="cell" style="left:836px">1/06946</span><span class="cell" style="left:986px">C25MZX</span><span class="cell" style="left:1136px">VND</span><span class="tag" style="left:1286px">Tiêu Chuẩn</span><span class="cell" style="left:1416px"><u class="dg">đ</u>2,222 (7.99%)</span></div>
  </div>
 </div>
 <div class="abs" style="left:519px;top:0;width:1px;height:481px;background:#d5d6dc"></div>
 <!-- v scrollbar -->
 <div class="abs" style="left:1601.35px;top:47px;width:14.65px;height:450px;background:#f0f0f0;border-left:1px solid #e6e6e9;border-right:1px solid #e2e2e5;border-bottom:1px solid #e0e0e4"></div>
 <div class="abs" style="left:1610px;top:0;width:6px;height:47px;background:linear-gradient(to right,rgba(0,0,0,0),rgba(0,0,0,0.035))"></div>
 <div class="abs" style="left:1605px;top:185.5px;width:8px;height:293px;background:#b3b3b3;border-radius:4px"></div>
 <!-- h scrollbar -->
 <div class="abs" style="left:0;top:481px;width:1601.35px;height:15.5px;background:#efefef;border-top:1px solid #dcdce0;border-bottom:1px solid #e0e0e4"></div>
 <div class="abs" style="left:3px;top:485.5px;width:965px;height:8px;background:#b3b3b3;border-radius:4px"></div>
</div>

<!-- pagination -->
<div class="inp" style="left:272.4px;top:940.75px;width:147px;height:39.25px;color:#000;border-color:#d4d4d8"><span style="left:14.5px;font-size:14.6px">20 Hàng/Trang</span><svg class="abs" style="left:121px;top:15.5px" width="11" height="8" viewBox="0 0 11 8" fill="none" stroke="#bdbdbd" stroke-width="1"><path d="M0.5 1L5.5 6.5L10.5 1"/></svg></div>
<svg class="abs" style="left:1038px;top:954px" width="8" height="13" viewBox="0 0 8 13" fill="none" stroke="#000" stroke-width="1.1"><path d="M7 0.5L1 6.5L7 12.5"/></svg>
<span class="abs" style="left:1069px;top:951.5px;line-height:20px;color:#3f4550;white-space:nowrap">1 / 1</span>
<svg class="abs" style="left:1120.5px;top:954px" width="8" height="13" viewBox="0 0 8 13" fill="none" stroke="#000" stroke-width="1.1"><path d="M1 0.5L7 6.5L1 12.5"/></svg>
<span class="abs" style="left:1746px;top:951.5px;line-height:20px;color:#3f4550;white-space:nowrap">Đi Đến</span>
<div class="abs" style="left:1799px;top:945px;width:43px;height:31px;background:#fff;border:1px solid #d9d9dd;border-radius:6px;color:#8e8fa0;text-align:center;line-height:29px">1</div>
<span class="abs" style="left:1850.5px;top:951.5px;line-height:20px;color:#3f4550;white-space:nowrap">Trang</span>

</body></html>
